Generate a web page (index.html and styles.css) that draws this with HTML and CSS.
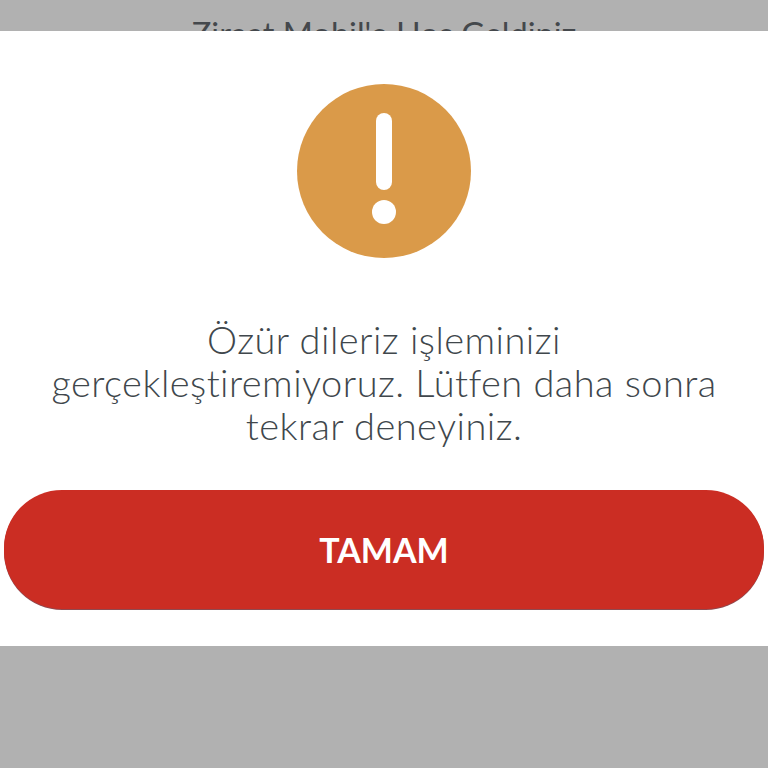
FILE: index.html
```html
<!DOCTYPE html>
<html>
<head>
  <title>Ziraat Mobil</title>
  <link rel="stylesheet" href="styles.css">
</head>
<body>
  <div class="top-bar">
    <div class="welcome">Ziraat Mobil'e Hoş Geldiniz</div>
  </div>

  <div class="dialog">
    <svg class="warning-icon" width="174" height="174" viewBox="0 0 174 174">
      <circle cx="87" cy="87" r="87" fill="#da9a49"/>
      <rect x="79" y="29" width="16" height="77" rx="8" fill="#fff"/>
      <circle cx="87" cy="128" r="12" fill="#fff"/>
    </svg>
    <p class="message">Özür dileriz işleminizi<br>gerçekleştiremiyoruz. Lütfen daha sonra<br>tekrar deneyiniz.</p>
    <button class="ok-button">TAMAM</button>
  </div>
</body>
</html>
```

FILE: styles.css
```css
/* page backdrop */
body {
  margin: 0;
  height: 768px;
  overflow: hidden;
  background-color: #b1b1b1;
  font-family: "Lato", "Liberation Sans", sans-serif;
}

.top-bar {
  height: 31px;
  overflow: hidden;
}

.welcome {
  padding-top: 15px;
  font-size: 32.5px;
  line-height: 38px;
  text-align: center;
  color: #44484c;
}

/* alert box */
.dialog {
  display: flex;
  flex-direction: column;
  align-items: center;
  height: 615px;
  padding-top: 53px;
  box-sizing: border-box;
  background-color: #fff;
}

.warning-icon {
  display: block;
}

.message {
  margin: 60px 0 0;
  font-size: 38px;
  font-weight: 300;
  letter-spacing: 0.45px;
  line-height: 43px;
  text-align: center;
  color: #40474c;
}

.ok-button {
  width: 760px;
  height: 119px;
  margin: 43px 0 0;
  border: none;
  border-radius: 58px;
  box-shadow: 0 1px 0 #8f4a50;
  background-color: #cb2d23;
  color: #fff;
  font-family: inherit;
  font-size: 34px;
  font-weight: 700;
}
```
